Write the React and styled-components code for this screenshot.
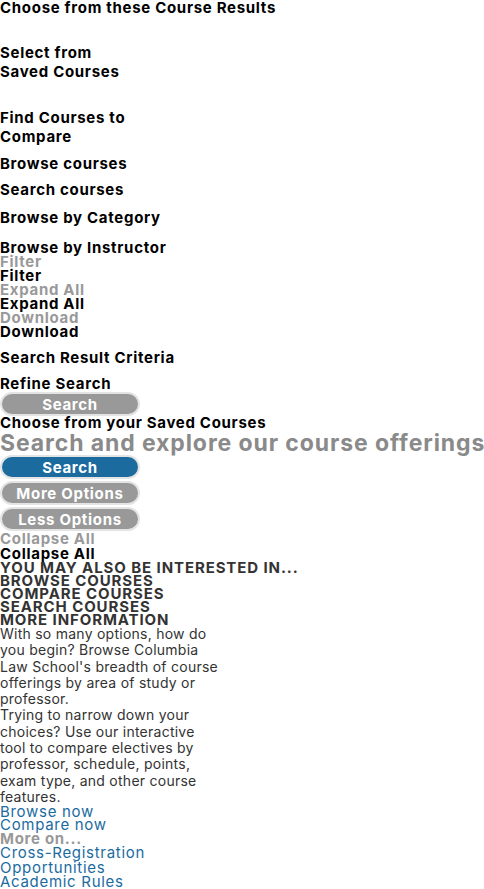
import React from "react";
import styled, { createGlobalStyle } from "styled-components";

const Global = createGlobalStyle`
  html, body { margin: 0; padding: 0; background: #fff; }
  body { font-family: Inter, "Open Sans", "DejaVu Sans", sans-serif; color: #000; }
  * { box-sizing: border-box; }
`;

const Page = styled.main`
  display: flex;
  flex-direction: column;
  align-items: flex-start;
  width: 484px;
`;

const Label = styled.div`
  font-size: 15px;
  font-weight: 700;
  letter-spacing: 0.7px;
  line-height: ${(p) => p.$lh || 15}px;
  margin-top: ${(p) => p.$mt || 0}px;
  color: ${(p) => (p.$tone === "mute" ? "#999999" : "#000000")};
  width: ${(p) => (p.$w ? `${p.$w}px` : "auto")};
  white-space: ${(p) => (p.$w ? "normal" : "nowrap")};
`;

const Display = styled.h1`
  margin: 2px 0 0;
  font-size: 23px;
  line-height: 24px;
  font-weight: 700;
  letter-spacing: 0.9px;
  color: #8a8a8a;
  white-space: nowrap;
`;

const Pill = styled.button`
  display: flex;
  align-items: center;
  justify-content: center;
  width: 140px;
  height: 24px;
  margin-top: ${(p) => p.$mt || 0}px;
  padding: 0;
  border: 2px solid #e4e4e4;
  border-radius: 12px;
  background: ${(p) => (p.$primary ? "#1b6b9f" : "#999999")};
  color: #fff;
  font-family: inherit;
  font-size: 15px;
  font-weight: 700;
  letter-spacing: 0.7px;
  line-height: 1;
`;

const Caps = styled.div`
  font-size: 15px;
  font-weight: 700;
  letter-spacing: 0.9px;
  line-height: 13px;
  color: #333333;
  text-transform: uppercase;
  white-space: nowrap;
`;

const Para = styled.p`
  margin: 0;
  width: 220px;
  font-size: 14px;
  font-weight: 400;
  letter-spacing: 0.25px;
  line-height: 16.3px;
  color: #333333;
`;

const TextLink = styled.a`
  display: block;
  width: 200px;
  font-size: 15px;
  font-weight: 400;
  letter-spacing: 0.7px;
  line-height: ${(p) => p.$lh || 13.5}px;
  color: #1b6b9f;
  text-decoration: none;
`;

const MoreOn = styled.div`
  font-size: 15px;
  font-weight: 700;
  letter-spacing: 0.7px;
  line-height: 13.5px;
  color: #999999;
`;

export default function App() {
  return (
    <>
      <Global />
      <Page>
        <Label $lh={15}>Choose from these Course Results</Label>
        <Label $lh={19} $mt={28} $w={135}>Select from Saved Courses</Label>
        <Label $lh={19} $mt={27} $w={135}>Find Courses to Compare</Label>
        <Label $lh={19} $mt={8}>Browse courses</Label>
        <Label $lh={19} $mt={7}>Search courses</Label>
        <Label $lh={19} $mt={9}>Browse by Category</Label>
        <Label $lh={15} $mt={13}>Browse by Instructor</Label>
        <Label $lh={14} $tone="mute">Filter</Label>
        <Label $lh={14}>Filter</Label>
        <Label $lh={14} $tone="mute">Expand All</Label>
        <Label $lh={14}>Expand All</Label>
        <Label $lh={14} $tone="mute">Download</Label>
        <Label $lh={14}>Download</Label>
        <Label $lh={19} $mt={9}>Search Result Criteria</Label>
        <Label $lh={15} $mt={9}>Refine Search</Label>
        <Pill $mt={1}>Search</Pill>
        <Label $lh={13}>Choose from your Saved Courses</Label>
        <Display>Search and explore our course offerings</Display>
        <Pill $primary>Search</Pill>
        <Pill $mt={2}>More Options</Pill>
        <Pill $mt={2}>Less Options</Pill>
        <Label $lh={15} $tone="mute">Collapse All</Label>
        <Label $lh={15}>Collapse All</Label>
        <Caps>You may also be interested in...</Caps>
        <Caps>Browse Courses</Caps>
        <Caps>Compare Courses</Caps>
        <Caps>Search Courses</Caps>
        <Caps>More Information</Caps>
        <Para>
          With so many options, how do you begin? Browse Columbia Law School's breadth of course
          offerings by area of study or professor.
        </Para>
        <Para>
          Trying to narrow down your choices? Use our interactive tool to compare electives by
          professor, schedule, points, exam type, and other course features.
        </Para>
        <TextLink href="#" $lh={13}>Browse now</TextLink>
        <TextLink href="#">Compare now</TextLink>
        <MoreOn>More on...</MoreOn>
        <TextLink href="#" $lh={15}>Cross-Registration Opportunities</TextLink>
        <TextLink href="#" $lh={14.5}>Academic Rules</TextLink>
      </Page>
    </>
  );
}
